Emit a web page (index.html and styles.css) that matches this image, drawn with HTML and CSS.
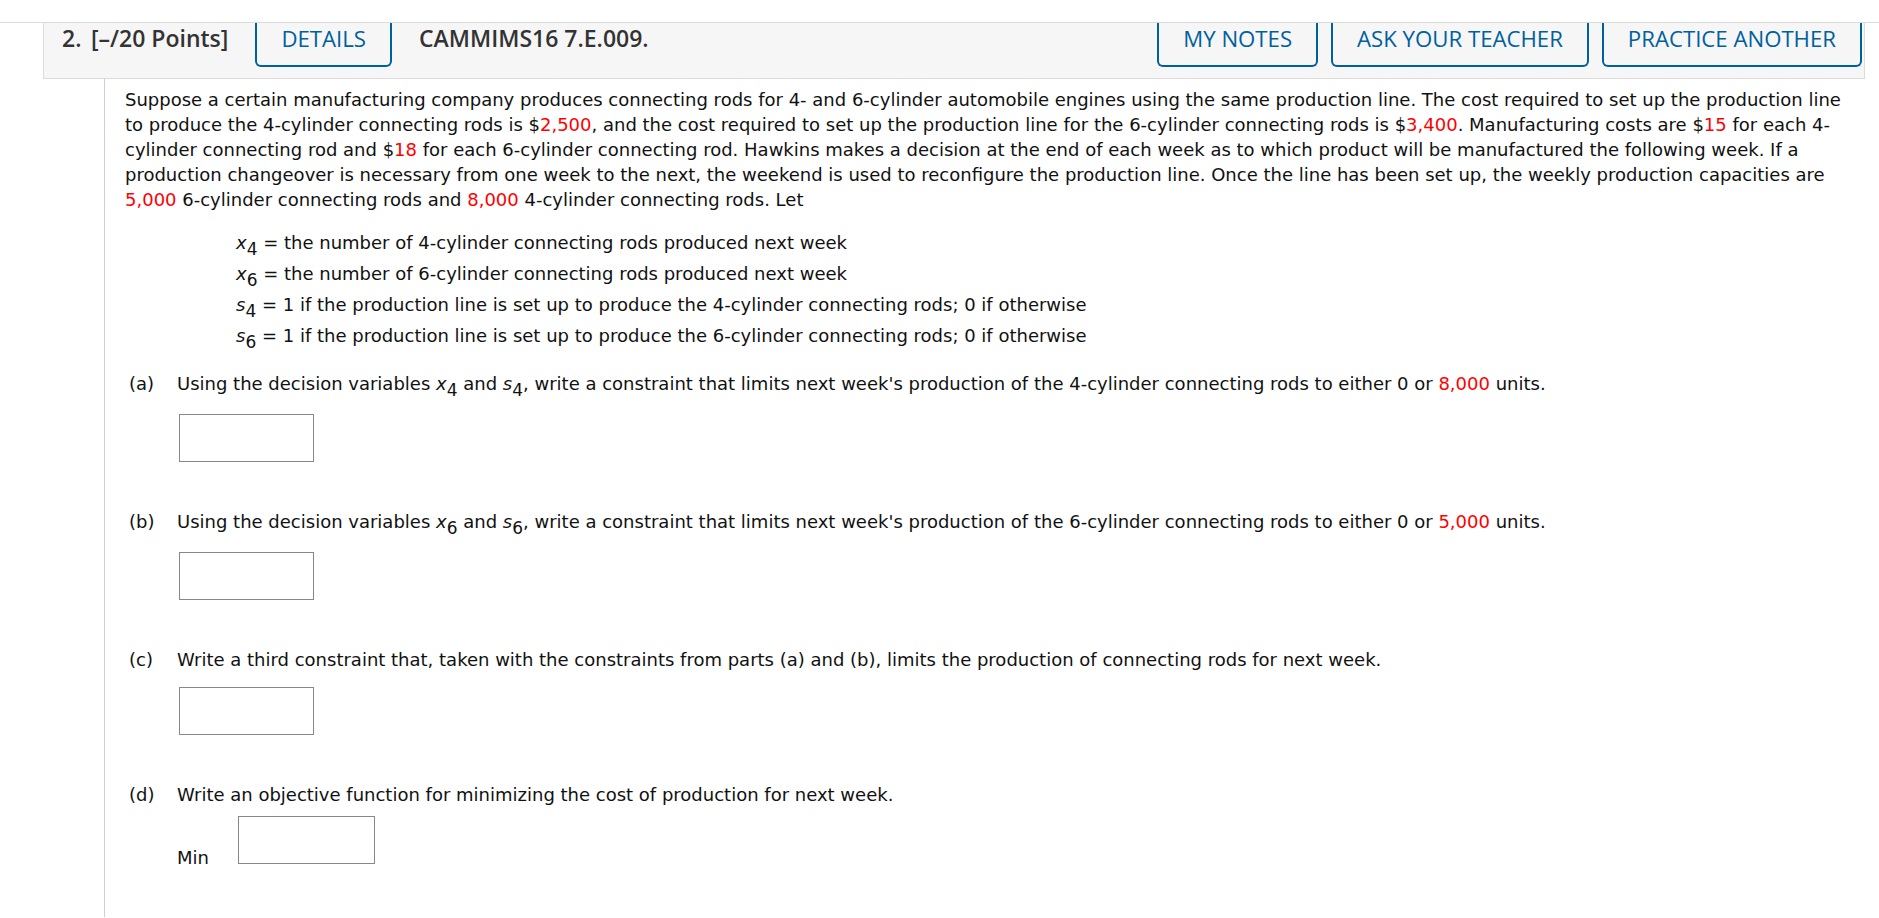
FILE: index.html
```html
<!DOCTYPE html>
<html lang="en">
<head>
<meta charset="utf-8">
<title>Question 2</title>
<link rel="stylesheet" href="styles.css">
</head>
<body>
<div class="page">
  <div class="qhead">
    <span class="qnum">2.</span>
    <span class="pts">[–/20 Points]</span>
    <span class="btn btn-details">DETAILS</span>
    <span class="qid">CAMMIMS16 7.E.009.</span>
    <span class="spacer"></span>
    <span class="btn">MY NOTES</span>
    <span class="btn">ASK YOUR TEACHER</span>
    <span class="btn">PRACTICE ANOTHER</span>
  </div>
  <div class="qbody">
    <p class="prob">Suppose a certain manufacturing company produces connecting rods for 4- and 6-cylinder automobile engines using the same production line. The cost required to set up the production line to produce the 4-cylinder connecting rods is $<span class="red">2,500</span>, and the cost required to set up the production line for the 6-cylinder connecting rods is $<span class="red">3,400</span>. Manufacturing costs are $<span class="red">15</span> for each 4-cylinder connecting rod and $<span class="red">18</span> for each 6-cylinder connecting rod. Hawkins makes a decision at the end of each week as to which product will be manufactured the following week. If a production changeover is necessary from one week to the next, the weekend is used to reconfigure the production line. Once the line has been set up, the weekly production capacities are <span class="red">5,000</span> 6-cylinder connecting rods and <span class="red">8,000</span> 4-cylinder connecting rods. Let</p>
    <div class="vars">
      <div class="var"><i>x</i><sub>4</sub> = the number of 4-cylinder connecting rods produced next week</div>
      <div class="var"><i>x</i><sub>6</sub> = the number of 6-cylinder connecting rods produced next week</div>
      <div class="var"><i>s</i><sub>4</sub> = 1 if the production line is set up to produce the 4-cylinder connecting rods; 0 if otherwise</div>
      <div class="var"><i>s</i><sub>6</sub> = 1 if the production line is set up to produce the 6-cylinder connecting rods; 0 if otherwise</div>
    </div>
    <div class="part part-a">
      <div class="prow"><span class="plabel">(a)</span><span class="ptext">Using the decision variables <i>x</i><sub>4</sub> and <i>s</i><sub>4</sub>, write a constraint that limits next week's production of the 4-cylinder connecting rods to either 0 or <span class="red">8,000</span> units.</span></div>
      <div class="ans"><span class="box"></span></div>
    </div>
    <div class="part part-b">
      <div class="prow"><span class="plabel">(b)</span><span class="ptext">Using the decision variables <i>x</i><sub>6</sub> and <i>s</i><sub>6</sub>, write a constraint that limits next week's production of the 6-cylinder connecting rods to either 0 or <span class="red">5,000</span> units.</span></div>
      <div class="ans"><span class="box"></span></div>
    </div>
    <div class="part part-c">
      <div class="prow"><span class="plabel">(c)</span><span class="ptext">Write a third constraint that, taken with the constraints from parts (a) and (b), limits the production of connecting rods for next week.</span></div>
      <div class="ans"><span class="box"></span></div>
    </div>
    <div class="part part-d">
      <div class="prow"><span class="plabel">(d)</span><span class="ptext">Write an objective function for minimizing the cost of production for next week.</span></div>
      <div class="ans ans-min"><span class="minlabel">Min</span><span class="box box-min"></span></div>
    </div>
  </div>
</div>
</body>
</html>
```

FILE: styles.css
```css
html, body {
  margin: 0;
  padding: 0;
  background: #fff;
}

.page {
  margin-top: 22px;
  border-top: 1px solid #dcdcdc;
  min-height: 895px;
}

.qhead {
  display: flex;
  align-items: flex-start;
  margin-left: 43px;
  margin-right: 14px;
  height: 55px;
  background: #f6f6f6;
  border-left: 1px solid #dcdcdc;
  border-right: 1px solid #dcdcdc;
  border-bottom: 1px solid #dcdcdc;
  font-family: "Open Sans", "Liberation Sans", sans-serif;
  font-size: 23px;
  line-height: 30px;
  color: #333;
}

.qnum {
  font-weight: 600;
  margin-left: 18px;
  width: 29px;
}

.pts {
  font-weight: 600;
}

.qid {
  font-weight: 600;
  margin-left: 27px;
}

.spacer {
  flex: 1;
}

.btn {
  color: #00609e;
  font-size: 22.2px;
  border: 2px solid #00609e;
  border-top: none;
  border-radius: 0 0 6px 6px;
  padding: 1px 24px 11px;
  margin-right: 13px;
}

.btn-details {
  margin-left: 27px;
  margin-right: 0;
}

.btn:last-child {
  margin-right: 2px;
}

.qbody {
  margin-left: 104px;
  border-left: 1px solid #cfcfcf;
  padding-left: 20px;
  padding-right: 29px;
  padding-top: 8px;
  min-height: 830px;
  font-family: "DejaVu Sans", Verdana, sans-serif;
  font-size: 18px;
  line-height: 25px;
  color: #111;
}

.prob {
  margin: 0;
}

.red {
  color: #f00;
}

.vars {
  margin: 15px 0 0 111px;
}

.var {
  line-height: 31px;
}

i {
  font-style: italic;
}

sub {
  font-size: 17px;
  line-height: 0;
  vertical-align: -6px;
}

.part {
  margin-top: 47px;
}

.part-a {
  margin-top: 20px;
}

.prow {
  display: flex;
}

.plabel {
  width: 52px;
  padding-left: 4px;
  box-sizing: border-box;
  flex: none;
}

.ans {
  margin: 18px 0 0 54px;
}

.part-c .ans {
  margin-top: 15px;
}

.box {
  display: block;
  width: 133px;
  height: 46px;
  border: 1px solid #888;
  background: #fff;
}

.ans-min {
  margin: 9px 0 0 52px;
}

.minlabel {
  display: inline-block;
}

.box-min {
  display: inline-block;
  vertical-align: baseline;
  margin-left: 29px;
  width: 135px;
}
```
